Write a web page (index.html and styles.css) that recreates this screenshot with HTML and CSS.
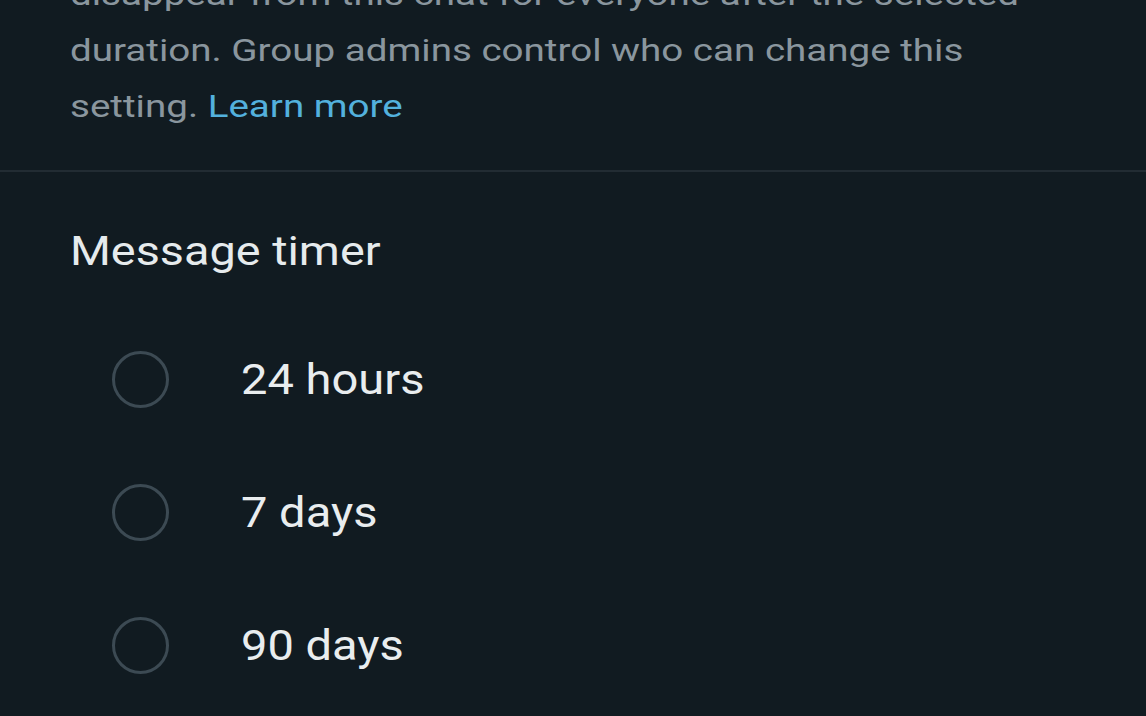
FILE: index.html
```html
<!DOCTYPE html>
<html>
<head>
<meta charset="utf-8">
<link rel="stylesheet" href="styles.css">
</head>
<body>
<div class="screen">
  <section class="info">
    <p class="desc">disappear from this chat for everyone after the selected<br>duration. Group admins control who can change this<br>setting. <a class="link" href="#">Learn more</a></p>
  </section>
  <div class="divider"></div>
  <section class="timer">
    <h2 class="title">Message timer</h2>
    <ul class="options">
      <li class="option"><span class="radio"></span><span class="label">24 hours</span></li>
      <li class="option"><span class="radio"></span><span class="label">7 days</span></li>
      <li class="option"><span class="radio"></span><span class="label">90 days</span></li>
    </ul>
  </section>
</div>
</body>
</html>
```
FILE: styles.css
```css
html, body {
  margin: 0;
  padding: 0;
  background: #111b21;
  overflow: hidden;
}
.screen {
  width: 1146px;
  height: 716px;
  overflow: hidden;
  font-family: Roboto, "Liberation Sans", sans-serif;
  background: #111b21;
}
.info {
  padding: 0 70px 0 70px;
  margin-top: -34px;
  height: 204px;
  box-sizing: border-box;
}
.desc {
  margin: 0;
  width: 900px;
  white-space: nowrap;
  font-size: 32px;
  line-height: 56px;
  color: #8a969e;
  transform: scaleX(1.205);
  transform-origin: left top;
}
.link {
  color: #53b1dd;
  text-decoration: none;
}
.divider {
  height: 2px;
  background: #222c33;
}
.timer {
  padding: 0 70px;
}
.title {
  margin: 0;
  padding-top: 56px;
  font-size: 40px;
  line-height: 48px;
  font-weight: 400;
  color: #e6ebed;
  transform: scaleX(1.17);
  transform-origin: left top;
}
.options {
  list-style: none;
  margin: 0;
  padding: 37px 0 0 0;
}
.option {
  display: flex;
  align-items: center;
  height: 133px;
}
.radio {
  width: 51px;
  height: 51px;
  border: 3px solid #3c4a53;
  border-radius: 50%;
  margin-left: 42px;
  flex: none;
}
.label {
  display: block;
  margin-left: 72px;
  font-size: 42px;
  line-height: 50px;
  color: #e9edef;
  transform: scaleX(1.12);
  transform-origin: left center;
}
```
